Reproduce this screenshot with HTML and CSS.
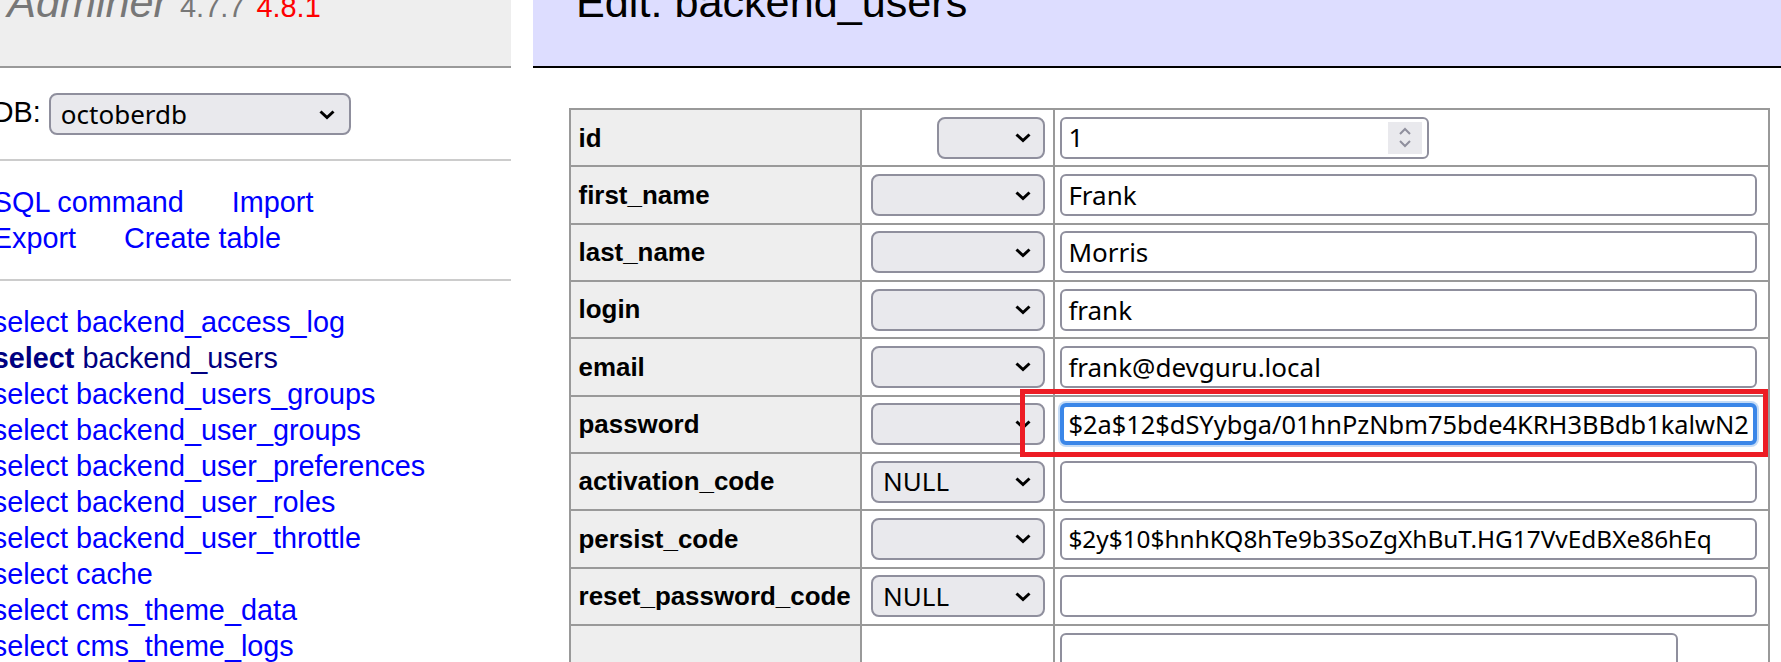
FILE: index.html
```html
<!DOCTYPE html>
<html lang="en">
<head>
<meta charset="utf-8">
<title>Edit: backend_users - Adminer</title>
<link rel="stylesheet" href="styles.css">
</head>
<body>
<div class="page">
  <div class="menu">
    <h1 class="menu-title"><a class="brand" href="#">Adminer</a> <span class="version">4.7.7</span> <a class="new-version" href="#">4.8.1</a></h1>
    <p class="dbs">DB: <span class="select db-select field"><span class="sel-text">octoberdb</span><svg class="chev" width="18" height="11" viewBox="0 0 18 11"><path d="M2.5 2.5L9 8.5L15.5 2.5" fill="none" stroke="#000" stroke-width="3"/></svg></span></p>
    <p class="links"><a href="#">SQL command</a> <a href="#">Import</a><br><a href="#">Export</a> <a href="#">Create table</a></p>
    <ul class="tables">
      <li><a href="#">select</a> <a href="#">backend_access_log</a></li>
      <li><a href="#" class="active visited">select</a> <a href="#" class="visited">backend_users</a></li>
      <li><a href="#">select</a> <a href="#">backend_users_groups</a></li>
      <li><a href="#">select</a> <a href="#">backend_user_groups</a></li>
      <li><a href="#">select</a> <a href="#">backend_user_preferences</a></li>
      <li><a href="#">select</a> <a href="#">backend_user_roles</a></li>
      <li><a href="#">select</a> <a href="#">backend_user_throttle</a></li>
      <li><a href="#">select</a> <a href="#">cache</a></li>
      <li><a href="#">select</a> <a href="#">cms_theme_data</a></li>
      <li><a href="#">select</a> <a href="#">cms_theme_logs</a></li>
      <li><a href="#">select</a> <a href="#">cms_theme_templates</a></li>
    </ul>
  </div>
  <div class="content">
    <h2 class="page-title">Edit: backend_users</h2>
    <div class="edit-wrap">
      <table class="edit">
        <colgroup><col class="c-name"><col class="c-fn"><col class="c-val"></colgroup>
        <tr>
          <th>id</th>
          <td class="fn"><span class="select small field"><span class="sel-text"></span><svg class="chev" width="18" height="11" viewBox="0 0 18 11"><path d="M2.5 2.5L9 8.5L15.5 2.5" fill="none" stroke="#000" stroke-width="3"/></svg></span></td>
          <td class="val"><span class="input number field"><span class="num-val">1</span><span class="spin"><svg width="14" height="9" viewBox="0 0 14 9"><path d="M2 7L7 2L12 7" fill="none" stroke="#8f8f9d" stroke-width="2"/></svg><svg width="14" height="9" viewBox="0 0 14 9"><path d="M2 2L7 7L12 2" fill="none" stroke="#8f8f9d" stroke-width="2"/></svg></span></span></td>
        </tr>
        <tr>
          <th>first_name</th>
          <td class="fn"><span class="select field"><span class="sel-text"></span><svg class="chev" width="18" height="11" viewBox="0 0 18 11"><path d="M2.5 2.5L9 8.5L15.5 2.5" fill="none" stroke="#000" stroke-width="3"/></svg></span></td>
          <td class="val"><input class="input field" type="text" value="Frank"></td>
        </tr>
        <tr>
          <th>last_name</th>
          <td class="fn"><span class="select field"><span class="sel-text"></span><svg class="chev" width="18" height="11" viewBox="0 0 18 11"><path d="M2.5 2.5L9 8.5L15.5 2.5" fill="none" stroke="#000" stroke-width="3"/></svg></span></td>
          <td class="val"><input class="input field" type="text" value="Morris"></td>
        </tr>
        <tr>
          <th>login</th>
          <td class="fn"><span class="select field"><span class="sel-text"></span><svg class="chev" width="18" height="11" viewBox="0 0 18 11"><path d="M2.5 2.5L9 8.5L15.5 2.5" fill="none" stroke="#000" stroke-width="3"/></svg></span></td>
          <td class="val"><input class="input field" type="text" value="frank"></td>
        </tr>
        <tr>
          <th>email</th>
          <td class="fn"><span class="select field"><span class="sel-text"></span><svg class="chev" width="18" height="11" viewBox="0 0 18 11"><path d="M2.5 2.5L9 8.5L15.5 2.5" fill="none" stroke="#000" stroke-width="3"/></svg></span></td>
          <td class="val"><input class="input field" type="text" value="frank@devguru.local"></td>
        </tr>
        <tr>
          <th>password</th>
          <td class="fn"><span class="select field"><span class="sel-text"></span><svg class="chev" width="18" height="11" viewBox="0 0 18 11"><path d="M2.5 2.5L9 8.5L15.5 2.5" fill="none" stroke="#000" stroke-width="3"/></svg></span></td>
          <td class="val"><input class="input field hash pw focused" type="text" value="$2a$12$dSYybga/01hnPzNbm75bde4KRH3BBdb1kalwN29"></td>
        </tr>
        <tr>
          <th>activation_code</th>
          <td class="fn"><span class="select field"><span class="sel-text">NULL</span><svg class="chev" width="18" height="11" viewBox="0 0 18 11"><path d="M2.5 2.5L9 8.5L15.5 2.5" fill="none" stroke="#000" stroke-width="3"/></svg></span></td>
          <td class="val"><input class="input field" type="text" value=""></td>
        </tr>
        <tr>
          <th>persist_code</th>
          <td class="fn"><span class="select field"><span class="sel-text"></span><svg class="chev" width="18" height="11" viewBox="0 0 18 11"><path d="M2.5 2.5L9 8.5L15.5 2.5" fill="none" stroke="#000" stroke-width="3"/></svg></span></td>
          <td class="val"><input class="input field hash" type="text" value="$2y$10$hnhKQ8hTe9b3SoZgXhBuT.HG17VvEdBXe86hEq"></td>
        </tr>
        <tr>
          <th>reset_password_code</th>
          <td class="fn"><span class="select field"><span class="sel-text">NULL</span><svg class="chev" width="18" height="11" viewBox="0 0 18 11"><path d="M2.5 2.5L9 8.5L15.5 2.5" fill="none" stroke="#000" stroke-width="3"/></svg></span></td>
          <td class="val"><input class="input field" type="text" value=""></td>
        </tr>
        <tr class="tall">
          <th></th>
          <td></td>
          <td class="val"><span class="blob"></span></td>
        </tr>
      </table>
      <div class="highlight"></div>
    </div>
  </div>
</div>
</body>
</html>
```

FILE: styles.css
```css
html, body {
  margin: 0;
  padding: 0;
  overflow: hidden;
  background: #fff;
}
body {
  font: 28.8px/1.25 "Liberation Sans", Arial, sans-serif;
  color: #000;
}
a {
  color: #00f;
  text-decoration: none;
}
a.visited {
  color: #000080;
}
.page {
  display: flex;
  align-items: flex-start;
  margin: -60px 0 0 -36px;
}
.menu {
  flex: 0 0 547.2px;
  width: 547.2px;
}
.menu-title {
  margin: 0;
  padding: 34.56px 43.2px 37.6px;
  font-size: 43.2px;
  font-weight: normal;
  color: #777;
  background: #eee;
  border-bottom: 2px solid #999;
  white-space: nowrap;
}
.brand {
  color: #777;
  font-style: italic;
}
.version {
  color: #777;
  font-size: 67%;
}
.new-version {
  color: #f00;
  font-size: 67%;
}
.dbs {
  margin: 0;
  padding: 25px 28.8px 24px;
  border-bottom: 2px solid #ccc;
  white-space: nowrap;
}
.links {
  margin: 0;
  padding: 23.8px 28.8px 22px;
  border-bottom: 2px solid #ccc;
}
.links a {
  white-space: nowrap;
  margin-right: 40px;
}
.tables {
  margin: 0;
  padding: 24px 28.8px;
  list-style: none;
  white-space: nowrap;
}
.tables .active {
  font-weight: bold;
}
.content {
  flex: 1;
  min-width: 0;
  margin-left: 57.6px;
}
.page-title {
  margin: 0 0 40px -36px;
  padding: 34.56px 43.2px 37.6px;
  font-size: 43.2px;
  font-weight: normal;
  color: #000;
  background: #ddf;
  border-bottom: 2px solid #000;
  white-space: nowrap;
}
.edit-wrap {
  position: relative;
  width: 1199px;
}
.edit {
  border-collapse: collapse;
  table-layout: fixed;
  width: 1199px;
  font-size: 25.92px;
  line-height: 1.25;
}
.c-name { width: 291px; }
.c-fn { width: 193px; }
.c-val { width: 715px; }
.edit th,
.edit td {
  border: 2px solid #999;
  padding: 0 7.78px;
  height: 55.3px;
  vertical-align: middle;
}
.edit td.val {
  padding-left: 5.6px;
}
.edit th {
  background: #eee;
  text-align: left;
  font-weight: bold;
  white-space: nowrap;
}
.edit td.fn {
  text-align: right;
}
.edit tr.tall td,
.edit tr.tall th {
  vertical-align: top;
  height: 90px;
}
.field {
  font-family: "Noto Sans", "Open Sans", sans-serif;
  font-size: 26px;
  line-height: 1.2;
  color: #000;
}
.field.hash {
  font-size: 24.4px;
}
.field.hash.pw {
  font-size: 25.4px;
}
.select {
  display: inline-flex;
  align-items: center;
  justify-content: space-between;
  box-sizing: border-box;
  width: 174px;
  height: 42px;
  padding: 0 11px 0 10px;
  background: #e9e9ed;
  border: 2px solid #8f8f9d;
  border-radius: 8px;
  vertical-align: middle;
  text-align: left;
}
.select.small {
  width: 108px;
}
.select.db-select {
  width: 302px;
  padding-right: 13px;
}
.chev {
  flex: none;
  display: block;
}
.input {
  box-sizing: border-box;
  width: 697px;
  height: 42px;
  margin: 0;
  padding: 0 6px;
  background: #fff;
  border: 2px solid #8f8f9d;
  border-radius: 6px;
  vertical-align: middle;
  outline: none;
}
.input.number {
  display: inline-flex;
  align-items: center;
  justify-content: space-between;
  width: 369px;
  padding: 0 5px 0 6px;
}
.spin {
  display: flex;
  flex-direction: column;
  align-items: center;
  justify-content: center;
  gap: 3px;
  width: 34px;
  height: 32px;
  background: #e9e9ed;
}
.spin svg {
  display: block;
}
.input.focused {
  border: 4px solid #3a86e8;
  padding: 0 4px;
  box-shadow: 0 0 0 2px #c4dbf6;
}
.blob {
  display: block;
  box-sizing: border-box;
  width: 618px;
  height: 80px;
  margin-top: 7px;
  border: 2px solid #8f8f9d;
  border-radius: 6px;
  background: #fff;
}
.highlight {
  position: absolute;
  left: 451px;
  top: 281px;
  width: 748px;
  height: 68px;
  box-sizing: border-box;
  border: 5px solid #ed1c24;
  pointer-events: none;
}
```
